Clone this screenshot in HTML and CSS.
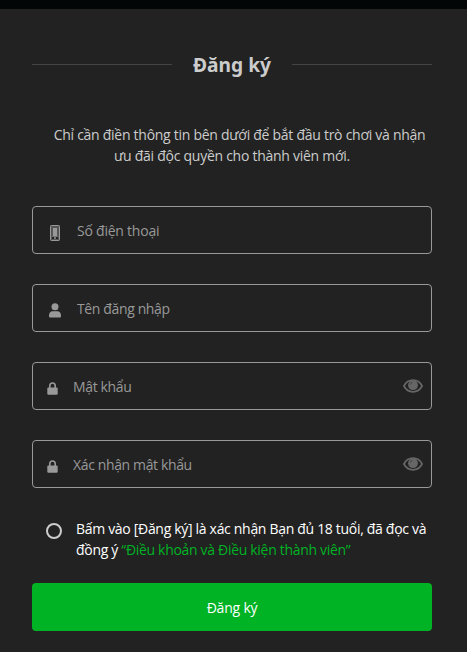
FILE: index.html
```html
<!DOCTYPE html>
<html lang="vi">
<head>
  <meta charset="UTF-8">
  <title>Đăng ký</title>
  <link rel="stylesheet" href="styles.css">
</head>
<body>
  <svg class="sprite">
    <symbol id="lock" viewBox="0 0 11 13">
      <path d="M2.8 6V3.700a2.700 2.700 0 0 1 5.400 0V6" fill="none" stroke="currentColor" stroke-width="1.600"/>
      <rect x="0.3" y="5.400" width="10.400" height="7.300" rx="1.200" fill="currentColor"/>
    </symbol>
    <symbol id="eye" viewBox="0 0 20 14">
      <path d="M.9 7C3 3 6 1.200 10 1.200S17 3 19.100 7C17 11 14 12.800 10 12.800S3 11 .9 7z" fill="none" stroke="currentColor" stroke-width="1.700"/>
      <circle cx="10" cy="6.200" r="4.900" fill="currentColor"/>
      <path d="M7.300 5.700a3 3 0 0 1 2.200-2.500" fill="none" stroke="#444" stroke-width="1"/>
    </symbol>
  </svg>

  <div class="register">
    <h1 class="title">Đăng ký</h1>

    <p class="intro">Chỉ cần điền thông tin bên dưới để bắt đầu trò chơi và nhận<br>ưu đãi độc quyền cho thành viên mới.</p>

    <form>
      <div class="field">
        <svg class="icon phone" viewBox="0 0 10 16">
          <rect x="0.5" y="0.5" width="9" height="15" rx="0.8" fill="#555" stroke="currentColor"/>
          <rect x="2" y="2" width="6" height="12" fill="#555"/>
          <rect x="3" y="3" width="4" height="8" fill="currentColor"/>
          <path d="M2 12h2v2H2zM6 12h2v2H6z" fill="#222"/>
          <path d="M2 11h6v1H2zM4 12h2v2H4z" fill="#777"/>
        </svg>
        <input type="text" placeholder="Số điện thoại">
      </div>
      <div class="field">
        <svg class="icon user" viewBox="0 0 12 15">
          <circle cx="6" cy="3.800" r="3.500" fill="currentColor"/>
          <path d="M0 12.500C0 10 1.500 8.200 3.500 8.200h5c2 0 3.500 1.800 3.500 4.300v.8q0 1.200-1.200 1.200H1.200Q0 14.500 0 13.300z" fill="currentColor"/>
        </svg>
        <input type="text" placeholder="Tên đăng nhập">
      </div>
      <div class="field password">
        <svg class="icon lock"><use href="#lock"/></svg>
        <input type="password" placeholder="Mật khẩu">
        <svg class="eye"><use href="#eye"/></svg>
      </div>
      <div class="field password">
        <svg class="icon lock"><use href="#lock"/></svg>
        <input type="password" placeholder="Xác nhận mật khẩu">
        <svg class="eye"><use href="#eye"/></svg>
      </div>

      <label class="terms">
        <input type="checkbox" class="check">
        <span>Bấm vào [Đăng ký] là xác nhận Bạn đủ 18 tuổi, đã đọc và<br>đồng ý <a class="link">“Điều khoản và Điều kiện thành viên”</a></span>
      </label>

      <button type="button" class="submit">Đăng ký</button>
    </form>
  </div>
</body>
</html>
```

FILE: styles.css
```css
* {
  box-sizing: border-box;
}
body {
  margin: 0;
  background: #222;
  color: #fff;
  font-family: "Open Sans", "Noto Sans", sans-serif;
  font-size: 14px;
}
.sprite {
  display: none;
}
.register {
  height: 652px;
  padding: 41px 35px 0 32px;
  border-top: 9px solid #020607;
  overflow: hidden;
}
.title {
  display: flex;
  align-items: center;
  justify-content: space-between;
  height: 29px;
  margin: 0;
  color: #ccc;
  font-family: "Noto Sans", sans-serif;
  font-size: 19.2px;
  font-weight: 700;
  white-space: nowrap;
}
.title::before,
.title::after {
  content: "";
  width: 140px;
  height: 1px;
  flex: none;
  background: #444;
}
.intro {
  margin: 45px 0 40px;
  color: #ccc;
  line-height: 21px;
  letter-spacing: -0.27px;
  text-align: center;
  text-indent: 15px;
  white-space: nowrap;
}
.field {
  display: flex;
  align-items: center;
  height: 48px;
  margin-bottom: 30px;
  padding: 0 8px 0 17px;
  border: 1px solid #999;
  border-radius: 4px;
}
.field input {
  flex: 1;
  min-width: 0;
  padding: 0;
  border: none;
  outline: none;
  background: none;
  color: #999;
  font: inherit;
  letter-spacing: -0.37px;
}
.field input::placeholder {
  color: #999;
  opacity: 1;
}
.icon {
  flex: none;
  margin-top: 5px;
  color: #999;
}
.phone {
  width: 10px;
  height: 16px;
  margin-right: 17px;
}
.phone + input {
  letter-spacing: -0.23px;
}
.user {
  width: 12px;
  height: 15px;
  margin: 5px 16px 0 -1px;
}
.lock {
  width: 11px;
  height: 13px;
  margin-right: 15px;
}
.password {
  padding-left: 14px;
}
.eye {
  flex: none;
  width: 20px;
  height: 14px;
  color: #666;
}
.terms {
  display: flex;
  height: 65px;
  padding: 0 0 0 14px;
  line-height: 21px;
  letter-spacing: -0.31px;
  white-space: nowrap;
}
.check {
  appearance: none;
  flex: none;
  width: 16px;
  height: 16px;
  margin: 5px 14px 0 0;
  border: 2px solid #ccc;
  border-radius: 50%;
}
.link {
  color: #00b324;
}
.submit {
  display: block;
  width: 100%;
  height: 48px;
  border: none;
  border-radius: 4px;
  background: #00b324;
  color: #fff;
  font: inherit;
  letter-spacing: -0.2px;
}
```
